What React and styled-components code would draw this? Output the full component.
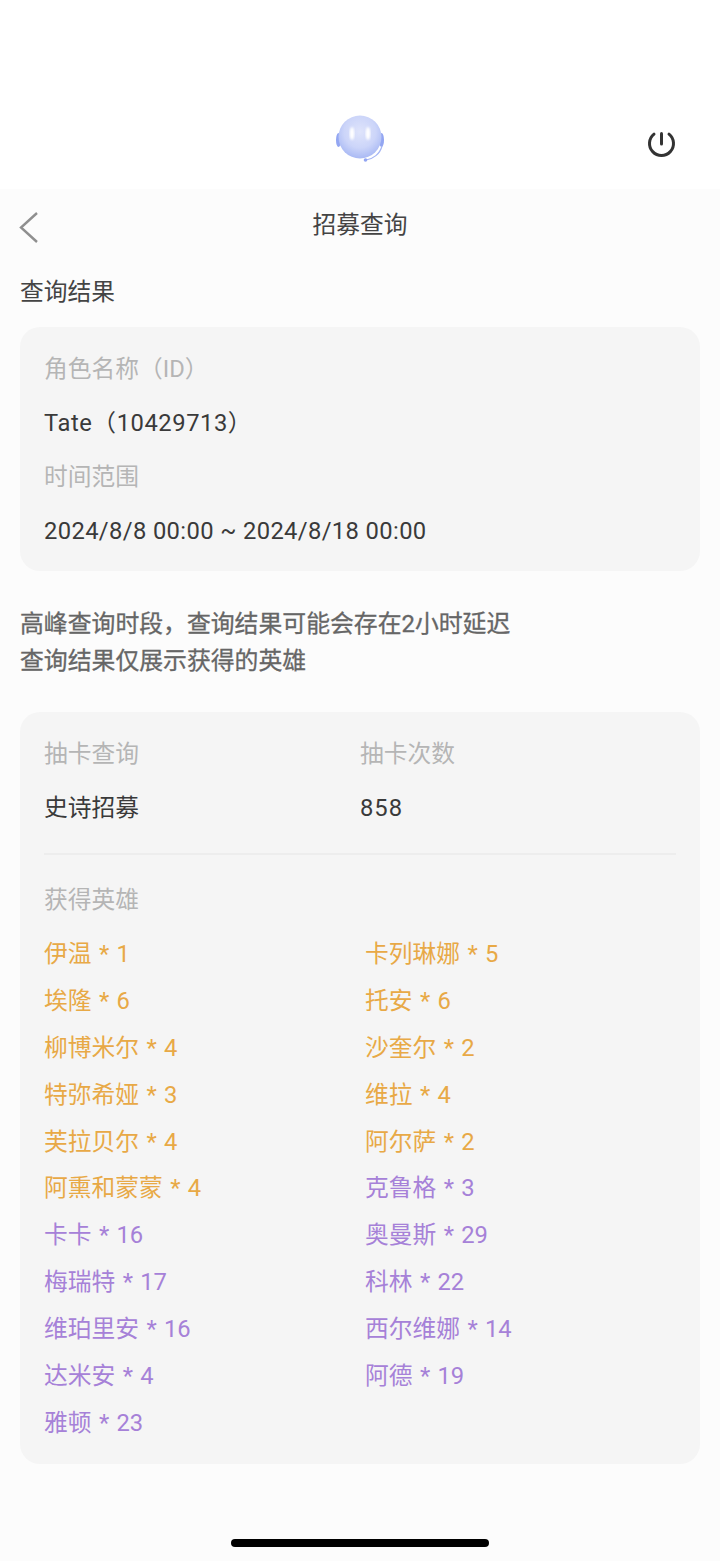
import React from 'react';
import styled, { createGlobalStyle } from 'styled-components';

const GlobalStyle = createGlobalStyle`
    html, body {
        margin: 0;
        padding: 0;
        background: #fcfcfc;
    }
    body {
        font-family: "Roboto", "Noto Sans CJK SC", sans-serif;
    }
`

const Page = styled.div`
    position: relative;
    width: 720px;
    height: 1561px;
    overflow: hidden;
    background: #fcfcfc;
`
const TopBar = styled.div`
    height: 189px;
    box-sizing: border-box;
    background: #fff;
    display: flex;
    justify-content: center;
    padding-top: 113px;
    position: relative;
`
const PowerButton = styled.div`
    position: absolute;
    left: 645px;
    top: 126px;
    width: 33px;
    height: 33px;
`
const NavBar = styled.div`
    height: 70px;
    box-sizing: border-box;
    padding-bottom: 3px;
    display: flex;
    align-items: center;
    justify-content: center;
    position: relative;
    font-size: 23.75px;
    color: #444;
`
const BackIcon = styled.div`
    position: absolute;
    left: 18px;
    top: 22px;
    width: 22px;
    height: 32px;
`
const Content = styled.div`
    padding: 0 20px;
`
const SectionTitle = styled.div`
    font-size: 23.75px;
    line-height: 32px;
    color: #444;
    margin-top: 17px;
    margin-bottom: 19px;
`
const Card = styled.div`
    background: #f5f5f5;
    border-radius: 20px;
    padding: ${(p) => p.$padding};
`
const Label = styled.div`
    font-size: 23.75px;
    line-height: 54px;
    color: #b5b5b5;
`
const Value = styled.div`
    font-size: 23.75px;
    line-height: 54px;
    color: #3a3a3a;
    letter-spacing: ${(p) => p.$spacing || '0'};
`
const Notes = styled.div`
    margin: 35px 0 32px;
    font-size: 23.85px;
    line-height: 37px;
    color: #666;
    -webkit-text-stroke: 0.3px #666;
`
const SummaryRow = styled.div`
    display: grid;
    grid-template-columns: 316px 1fr;
    padding-bottom: 18px;
    border-bottom: 2px solid #ededed;
`
const HeroLabel = styled(Label)`
    margin-top: 18px;
`
const HeroGrid = styled.div`
    display: grid;
    grid-template-columns: 321px 1fr;
    grid-auto-rows: 46.9px;
    margin-top: 4px;
`
const Hero = styled.div`
    font-size: 23.75px;
    line-height: 46.9px;
    word-spacing: 1.5px;
    color: ${(p) => (p.$tier === 'gold' ? '#e8a946' : '#a681d8')};
`
const HomeIndicator = styled.div`
    position: absolute;
    left: 231px;
    top: 1539px;
    width: 258px;
    height: 8px;
    border-radius: 4px;
    background: #000;
`

const heroes = [
    ['伊温 * 1', 'gold'], ['卡列琳娜 * 5', 'gold'],
    ['埃隆 * 6', 'gold'], ['托安 * 6', 'gold'],
    ['柳博米尔 * 4', 'gold'], ['沙奎尔 * 2', 'gold'],
    ['特弥希娅 * 3', 'gold'], ['维拉 * 4', 'gold'],
    ['芙拉贝尔 * 4', 'gold'], ['阿尔萨 * 2', 'gold'],
    ['阿熏和蒙蒙 * 4', 'gold'], ['克鲁格 * 3', 'purple'],
    ['卡卡 * 16', 'purple'], ['奥曼斯 * 29', 'purple'],
    ['梅瑞特 * 17', 'purple'], ['科林 * 22', 'purple'],
    ['维珀里安 * 16', 'purple'], ['西尔维娜 * 14', 'purple'],
    ['达米安 * 4', 'purple'], ['阿德 * 19', 'purple'],
    ['雅顿 * 23', 'purple'],
];

const Logo = () => (
    <svg width="50" height="50" viewBox="0 0 50 50">
        <defs>
            <radialGradient id="face" cx="0.5" cy="0.38" r="0.62">
                <stop offset="0" stopColor="#dfe4fb" />
                <stop offset="0.6" stopColor="#ccd5f9" />
                <stop offset="1" stopColor="#a9b9f4" />
            </radialGradient>
            <filter id="soft"><feGaussianBlur stdDeviation="0.5" /></filter>
            <filter id="eye"><feGaussianBlur stdDeviation="0.8" /></filter>
        </defs>
        <g filter="url(#soft)">
            <ellipse cx="3.5" cy="27" rx="2.5" ry="7" fill="#93a6f2" />
            <ellipse cx="46.5" cy="27" rx="2.5" ry="7" fill="#93a6f2" />
            <circle cx="25" cy="24" r="21.5" fill="url(#face)" />
            <path d="M47 33 C45 41 38 46 31 47" fill="none" stroke="#a5b5f4" strokeWidth="1.2" />
            <circle cx="30.5" cy="47" r="1.8" fill="#93a6f2" />
        </g>
        <ellipse cx="17" cy="20.5" rx="2.4" ry="6.5" fill="#fff" filter="url(#eye)" />
        <ellipse cx="33" cy="20.5" rx="2.4" ry="6.5" fill="#fff" filter="url(#eye)" />
    </svg>
);

export default function App() {
    return (
        <Page>
            <GlobalStyle />
            <TopBar>
                <div><Logo /></div>
                <PowerButton>
                    <svg width="33" height="33" viewBox="0 0 33 33" fill="none" stroke="#333" strokeWidth="3" strokeLinecap="round">
                        <path d="M9 8.1 A12 12 0 1 0 24 8.1" />
                        <path d="M16.5 7.5 V18" />
                    </svg>
                </PowerButton>
            </TopBar>
            <NavBar>
                <BackIcon>
                    <svg width="22" height="32" viewBox="0 0 22 32" fill="none" stroke="#8f8f8f" strokeWidth="2.4">
                        <path d="M19 2 L3 16.5 L19 31" />
                    </svg>
                </BackIcon>
                招募查询
            </NavBar>
            <Content>
                <SectionTitle>查询结果</SectionTitle>
                <Card $padding="15px 24px 13px">
                    <Label>角色名称（ID）</Label>
                    <Value $spacing="0.55px">Tate（10429713）</Value>
                    <Label>时间范围</Label>
                    <Value $spacing="0.37px">2024/8/8 00:00 ~ 2024/8/18 00:00</Value>
                </Card>
                <Notes>
                    高峰查询时段，查询结果可能会存在2小时延迟<br />
                    查询结果仅展示获得的英雄
                </Notes>
                <Card $padding="15px 24px 17px">
                    <SummaryRow>
                        <div>
                            <Label>抽卡查询</Label>
                            <Value>史诗招募</Value>
                        </div>
                        <div>
                            <Label>抽卡次数</Label>
                            <Value $spacing="1px">858</Value>
                        </div>
                    </SummaryRow>
                    <HeroLabel>获得英雄</HeroLabel>
                    <HeroGrid>
                        {heroes.map(([name, tier]) => (
                            <Hero key={name} $tier={tier}>{name}</Hero>
                        ))}
                    </HeroGrid>
                </Card>
            </Content>
            <HomeIndicator />
        </Page>
    );
}
